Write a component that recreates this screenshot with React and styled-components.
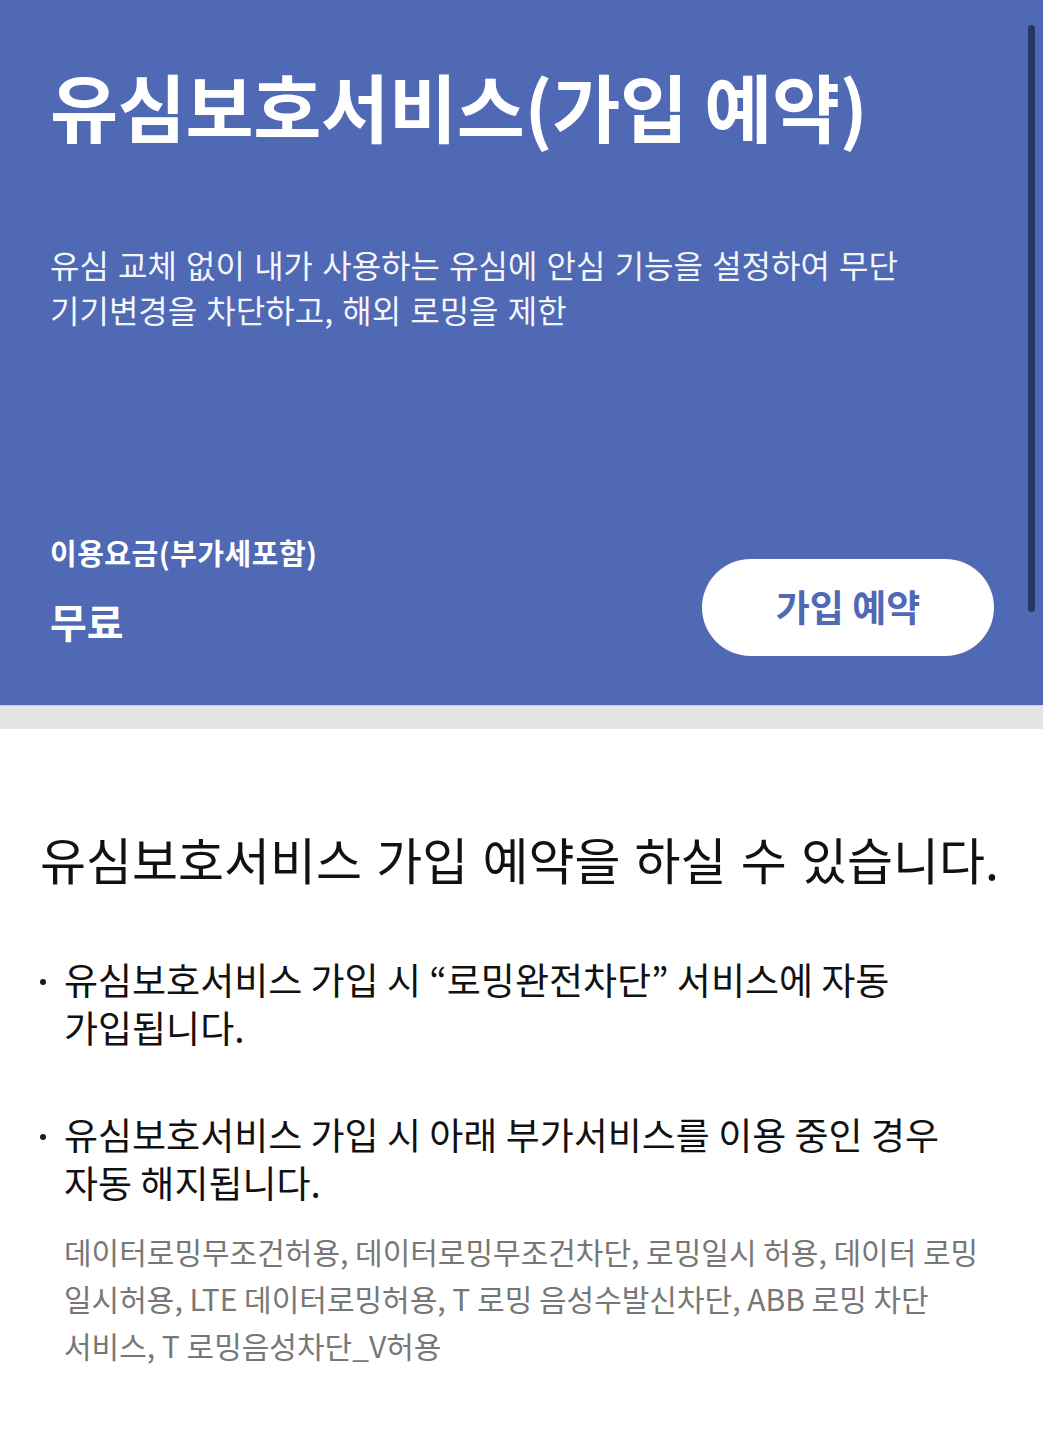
import React from "react";
import styled, { createGlobalStyle } from "styled-components";

const GlobalStyle = createGlobalStyle`
  html, body {
    margin: 0;
    padding: 0;
    background: #ffffff;
  }
  body {
    font-family: "Noto Sans CJK KR", "Noto Sans", sans-serif;
    -webkit-font-smoothing: antialiased;
    word-break: keep-all;
  }
`;

const roamingServices =
  "데이터로밍무조건허용, 데이터로밍무조건차단, 로밍일시 허용, 데이터 로밍 일시허용, LTE 데이터로밍허용, T 로밍 음성수발신차단, ABB 로밍 차단 서비스, T 로밍음성차단_V허용";

function App() {
  return (
    <Page>
      <GlobalStyle />
      <ScrollThumb />
      <Hero>
        <Title>유심보호서비스(가입 예약)</Title>
        <Description>
          유심 교체 없이 내가 사용하는 유심에 안심 기능을 설정하여 무단
          기기변경을 차단하고, 해외 로밍을 제한
        </Description>
        <PriceRow>
          <Price>
            <PriceLabel>이용요금(부가세포함)</PriceLabel>
            <PriceValue>무료</PriceValue>
          </Price>
          <ReserveButton type="button">가입 예약</ReserveButton>
        </PriceRow>
      </Hero>
      <Divider />
      <Content>
        <Heading>유심보호서비스 가입 예약을 하실 수 있습니다.</Heading>
        <Notice>
          <NoticeItem>
            유심보호서비스 가입 시 “로밍완전차단” 서비스에 자동 가입됩니다.
          </NoticeItem>
          <NoticeItem>
            유심보호서비스 가입 시 아래 부가서비스를 이용 중인 경우 자동
            해지됩니다.
            <SubText>{roamingServices}</SubText>
          </NoticeItem>
        </Notice>
      </Content>
    </Page>
  );
}

const Page = styled.div`
  position: relative;
  width: 100%;
  min-height: 1440px;
  background: #ffffff;
`;

// overlay scrollbar thumb on the right edge
const ScrollThumb = styled.div`
  position: absolute;
  top: 25px;
  right: 8px;
  width: 7px;
  height: 587px;
  border-radius: 4px;
  background: #283461;
`;

const Hero = styled.section`
  box-sizing: border-box;
  height: 705px;
  display: flex;
  flex-direction: column;
  padding: 60px 50px 49px 50px;
  background: #4f69b5;
  color: #ffffff;
`;

const Title = styled.h1`
  margin: 0;
  font-size: 74px;
  font-weight: 700;
  line-height: 90px;
  letter-spacing: -0.3px;
`;

const Description = styled.p`
  margin: 92px 0 0 0;
  font-size: 32px;
  font-weight: 400;
  line-height: 45px;
  word-spacing: 2px;
  color: rgba(255, 255, 255, 0.95);
`;

const PriceRow = styled.div`
  margin-top: auto;
  display: flex;
  align-items: flex-end;
  justify-content: space-between;
`;

const Price = styled.div`
  display: flex;
  flex-direction: column;
  gap: 24px;
  padding-bottom: 10px;
`;

const PriceLabel = styled.span`
  font-size: 29px;
  font-weight: 700;
  line-height: 40px;
  letter-spacing: 0.5px;
`;

const PriceValue = styled.span`
  font-size: 40px;
  font-weight: 700;
  line-height: 50px;
`;

const ReserveButton = styled.button`
  width: 292px;
  height: 97px;
  margin-right: -1px;
  padding: 0 0 4px 0;
  border: none;
  border-radius: 49px;
  background: #ffffff;
  color: #4f69b5;
  font-family: inherit;
  font-size: 37px;
  font-weight: 700;
  cursor: pointer;
`;

const Divider = styled.div`
  height: 23px;
  background: #e5e5e5;
  border-top: 1px solid #c9d1ea;
`;

const Content = styled.section`
  padding: 98px 36px 60px 40px;
`;

const Heading = styled.h2`
  margin: 0;
  font-size: 50px;
  font-weight: 400;
  line-height: 62px;
  word-spacing: 3px;
  color: #111111;
`;

const Notice = styled.ul`
  list-style: none;
  margin: 66px 0 0 0;
  padding: 0;
  display: flex;
  flex-direction: column;
  gap: 59px;
`;

const NoticeItem = styled.li`
  position: relative;
  padding-left: 24px;
  padding-right: 14px;
  font-size: 37px;
  line-height: 48px;
  color: #111111;

  &::before {
    content: "";
    position: absolute;
    left: 0;
    top: 24px;
    width: 6px;
    height: 6px;
    border-radius: 50%;
    background: #1a1a1a;
  }
`;

const SubText = styled.p`
  margin: 22px 0 0 0;
  font-size: 30px;
  line-height: 47px;
  color: #777777;
`;

export default App;
